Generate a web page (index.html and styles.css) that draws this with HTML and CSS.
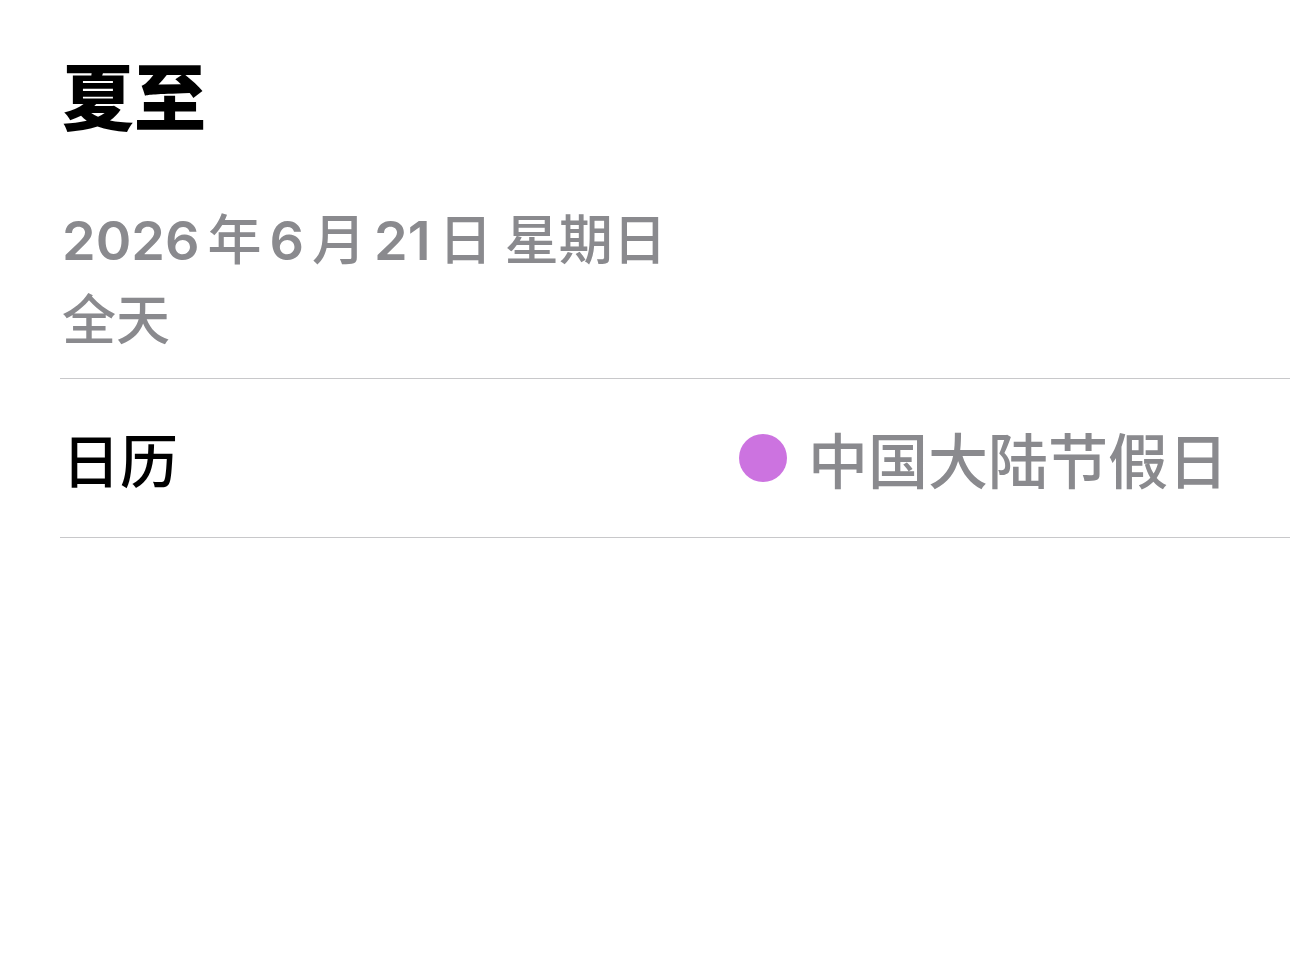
FILE: index.html
```html
<!DOCTYPE html>
<html lang="zh">
<head>
  <meta charset="UTF-8">
  <title>夏至</title>
  <link rel="stylesheet" href="styles.css">
</head>
<body>
  <div class="event">
    <div class="header">
      <h1 class="title">夏至</h1>
      <div class="meta"><span class="num">2026</span>年<span class="num">6</span>月<span class="num">21</span>日 星期日</div>
      <div class="meta">全天</div>
    </div>

    <div class="row">
      <span class="row-label">日历</span>
      <span class="row-value">
        <span class="dot"></span>
        <span>中国大陆节假日</span>
      </span>
    </div>
  </div>
</body>
</html>
```

FILE: styles.css
```css
body {
  margin: 0;
  padding: 0;
  background: #fff;
  font-family: "Noto Sans CJK SC", "Noto Sans", sans-serif;
  color: #000;
}

.event {
  padding-left: 60px;
}

.header {
  padding: 50px 0 21px 2px;
  border-bottom: 1px solid #c8c8ca;
}

.title {
  margin: 0 0 61px;
  font-size: 72px;
  line-height: 86px;
  font-weight: 900;
}

.meta {
  height: 80px;
  font-size: 54px;
  line-height: 80px;
  color: #8a8a8e;
  font-weight: 500;
}

/* digits are wider and set apart from the hanzi */
.num {
  font-family: "Inter", "Noto Sans", sans-serif;
  font-weight: 600;
  line-height: 0;
  margin-right: 8px;
}

.meta .num:not(:first-child) {
  margin-left: 8px;
}

.row {
  display: flex;
  align-items: center;
  justify-content: space-between;
  height: 158px;
  padding: 0 62px 0 2px;
  border-bottom: 1px solid #c8c8ca;
}

.row-label {
  font-size: 58px;
  line-height: 1;
  font-weight: 500;
}

.row-value {
  display: flex;
  align-items: center;
  gap: 21px;
  font-size: 60px;
  line-height: 1;
  color: #8a8a8e;
  font-weight: 500;
}

.dot {
  width: 48px;
  height: 48px;
  border-radius: 50%;
  background: #cc73e0;
}
```
